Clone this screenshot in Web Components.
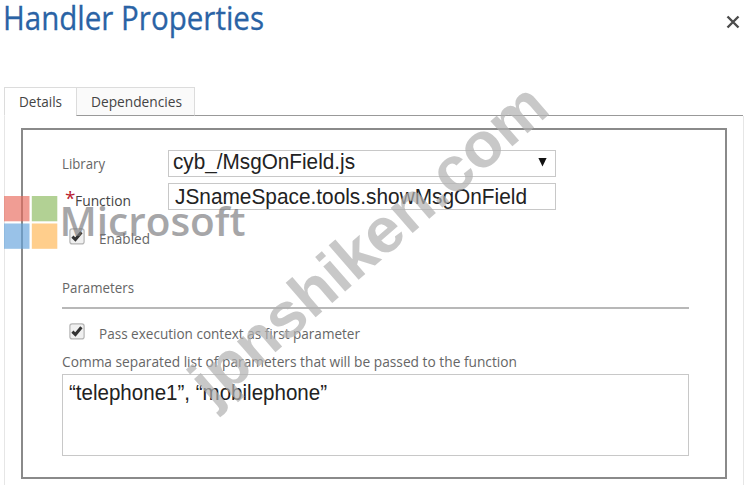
<!DOCTYPE html>
<html lang="en">
<head>
<meta charset="utf-8">
<title>Handler Properties</title>
<style>
  body {
    margin: 0;
    width: 747px;
    height: 485px;
    overflow: hidden;
    background: #fff;
    font-family: "Open Sans", "Noto Sans", sans-serif;
  }
</style>
</head>
<body>
<handler-dialog></handler-dialog>

<script>
// text squeezed or stretched to an exact width
class FitText extends HTMLElement {
  constructor() {
    super();
    this.attachShadow({ mode: 'open' }).innerHTML = `
      <style>
        :host { display: block; white-space: nowrap; }
        span { display: inline-block; transform-origin: 0 50%; }
      </style>
      <span><slot></slot></span>
    `;
  }

  connectedCallback() {
    const span = this.shadowRoot.querySelector('span');
    const width = Number(this.getAttribute('width'));
    this.style.width = width + 'px';
    const natural = span.getBoundingClientRect().width;
    if (natural) span.style.transform = `scaleX(${width / natural})`;
  }
}

class TabItem extends HTMLElement {
  constructor() {
    super();
    this.attachShadow({ mode: 'open' }).innerHTML = `
      <style>
        :host {
          display: block;
          box-sizing: border-box;
          height: 29px;
          padding-left: 14px;
          border: 1px solid #dcdcdc;
          border-bottom: 1px solid #999;
          background: #fafafa;
          font-size: 14px;
          line-height: 27px;
          color: #444;
        }
        :host([active]) {
          border-bottom-color: #fff;
          border-right: 0;
          background: #fff;
        }
      </style>
      <slot></slot>
    `;
  }
}

class CheckBox extends HTMLElement {
  constructor() {
    super();
    this.attachShadow({ mode: 'open' }).innerHTML = `
      <style>
        :host { display: block; width: 16px; height: 17px; flex: none; }
        svg { display: block; }
      </style>
      <svg width="16" height="17" viewBox="0 0 16 17">
        <rect x=".9" y=".9" width="14.2" height="15" rx="2.2" fill="#f0f0f0" stroke="#b4b4b4" stroke-width="1.2"/>
        <path d="M3.4 8.6 L6.4 11.5 L12.4 4.2" fill="none" stroke="#333" stroke-width="3"/>
      </svg>
    `;
  }
}

class TextBox extends HTMLElement {
  constructor() {
    super();
    this.attachShadow({ mode: 'open' }).innerHTML = `
      <style>
        :host {
          display: flex;
          justify-content: space-between;
          box-sizing: border-box;
          width: 388px;
          height: 27px;
          padding: 0 8px 0 6px;
          border: 1px solid #c8c8c8;
          background: #fff;
          color: #222;
          font: 22.5px/25px "Liberation Sans", Arial, sans-serif;
        }
        :host([dropdown]) { line-height: 22px; padding-left: 4px; }
        :host([multiline]) { width: 627px; height: 82px; line-height: 36px; }
        svg { display: none; margin-top: 7px; }
        :host([dropdown]) svg { display: block; }
      </style>
      <slot></slot>
      <svg width="9" height="9" viewBox="0 0 9 9"><path d="M.4 0H8.6L4.5 8.6Z" fill="#111"/></svg>
    `;
  }
}

class WaterMark extends HTMLElement {
  constructor() {
    super();
    this.attachShadow({ mode: 'open' }).innerHTML = `
      <style>
        :host { position: absolute; top: 0; left: 0; pointer-events: none; }
        svg { display: block; }
      </style>
      <svg width="747" height="485" viewBox="0 0 747 485">
        <g opacity=".65">
          <rect x="4" y="196" width="25.5" height="25.3" fill="#e96a5b"/>
          <rect x="31.8" y="196" width="25.5" height="25.3" fill="#8aba5c"/>
          <rect x="4" y="223.5" width="25.5" height="25.3" fill="#63a3dc"/>
          <rect x="31.8" y="223.5" width="25.5" height="25.3" fill="#ffb44f"/>
          <text x="59.5" y="236" font-family="Open Sans, sans-serif" font-size="40.5" font-weight="600"
            textLength="186" lengthAdjust="spacingAndGlyphs" fill="#77787b">Microsoft</text>
        </g>
        <text transform="translate(212.5 407) rotate(-41)" font-family="Liberation Sans, Arial, sans-serif"
          font-size="63" font-weight="700" textLength="450" lengthAdjust="spacingAndGlyphs"
          fill="#b0b0b0" fill-opacity=".7">jpnshiken.com</text>
      </svg>
    `;
  }
}

class HandlerDialog extends HTMLElement {
  constructor() {
    super();
    this.attachShadow({ mode: 'open' }).innerHTML = `
      <style>
        :host { display: block; position: relative; width: 747px; height: 485px; overflow: hidden; }
        * { box-sizing: border-box; }
        header {
          display: flex;
          justify-content: space-between;
          height: 87px;
          padding: 0 7px 0 3px;
          color: #2a63a5;
          font-size: 33px;
          line-height: 36px;
          -webkit-text-stroke: .3px #2a63a5;
        }
        header svg { margin-top: 15px; }
        .tabs { display: flex; padding-left: 4px; }
        .tabs .rest { width: 548px; border-bottom: 1px solid #999; }
        .details { width: 72px; }
        .deps { width: 119px; }
        .panel {
          width: 740px;
          height: 380px;
          margin-left: 4px;
          padding: 12px 0 0 16px;
          border: solid #e6e6e6;
          border-width: 0 1px;
        }
        .box {
          width: 706px;
          height: 351px;
          padding: 20px 0 0 39px;
          border: 2px solid #8a8a8a;
          font-size: 14.5px;
          line-height: 20px;
          color: #666;
        }
        .row { display: flex; }
        .row .name { display: flex; width: 106px; }
        .library { height: 33px; }
        .library .name { padding-top: 4px; }
        .function { height: 45px; }
        .function .name { padding: 8px 0 0 3px; color: #444; }
        .star { width: 10px; margin-top: -3px; color: #b8202e; font-size: 19px; }
        .check { gap: 14px; padding-left: 7px; }
        .enabled { height: 49px; }
        .enabled fit-text { margin-top: 1px; }
        .section { width: 627px; height: 32px; padding-top: 1px; border-bottom: 2px solid #b8b8b8; }
        .pass { height: 43px; padding-top: 14px; }
        .pass fit-text { margin-top: 1px; }
        .hint { height: 22px; }
      </style>
      <header>
        <fit-text width="261">Handler Properties</fit-text>
        <svg width="14" height="14" viewBox="0 0 14 14"><path d="M1.5 1.5L12.5 12.5M12.5 1.5L1.5 12.5" stroke="#4c4c4c" stroke-width="2.4"/></svg>
      </header>
      <div class="tabs">
        <tab-item class="details" active><fit-text width="43">Details</fit-text></tab-item>
        <tab-item class="deps"><fit-text width="91">Dependencies</fit-text></tab-item>
        <div class="rest"></div>
      </div>
      <div class="panel">
        <div class="box">
          <div class="row library">
            <div class="name"><fit-text width="43">Library</fit-text></div>
            <text-box dropdown><fit-text width="182">cyb_/MsgOnField.js</fit-text></text-box>
          </div>
          <div class="row function">
            <div class="name"><span class="star">*</span><fit-text width="56">Function</fit-text></div>
            <text-box><fit-text width="352">JSnameSpace.tools.showMsgOnField</fit-text></text-box>
          </div>
          <div class="row check enabled">
            <check-box></check-box>
            <fit-text width="51">Enabled</fit-text>
          </div>
          <div class="section"><fit-text width="72">Parameters</fit-text></div>
          <div class="row check pass">
            <check-box></check-box>
            <fit-text width="261">Pass execution context as first parameter</fit-text>
          </div>
          <div class="hint"><fit-text width="455">Comma separated list of parameters that will be passed to the function</fit-text></div>
          <text-box multiline><fit-text width="258">“telephone1”, “mobilephone”</fit-text></text-box>
        </div>
      </div>
      <water-mark></water-mark>
    `;
  }
}

// leaf elements first, so that the dialog finds them ready
customElements.define('fit-text', FitText);
customElements.define('tab-item', TabItem);
customElements.define('check-box', CheckBox);
customElements.define('text-box', TextBox);
customElements.define('water-mark', WaterMark);
customElements.define('handler-dialog', HandlerDialog);
</script>
</body>
</html>
